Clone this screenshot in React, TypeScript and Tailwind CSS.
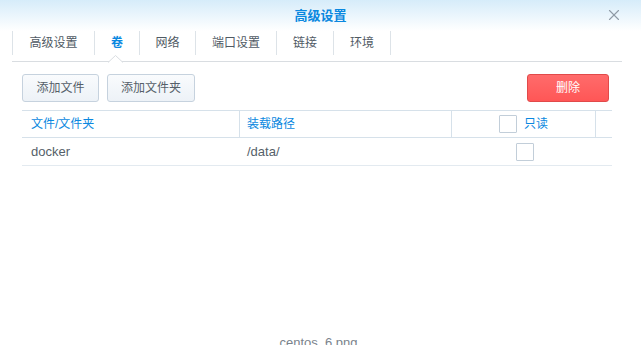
import { X } from "lucide-react";

const tabs = ["高级设置", "卷", "网络", "端口设置", "链接", "环境"];
const tabWidths = ["w-[81px]", "w-[44px]", "w-[55px]", "w-[80px]", "w-[56px]", "w-[56px]"];

export default function App() {
  return (
    <div className="w-[641px] h-[345px] overflow-hidden bg-white relative font-['Liberation_Sans','Noto_Sans_CJK_SC',sans-serif]">
      {/* 标题栏 */}
      <div className="h-[31px] bg-gradient-to-b from-[#d6ecfa] to-white flex items-center justify-center relative">
        <span className="text-[13px] font-bold text-[#0a88e0] leading-none">高级设置</span>
        <X className="absolute right-[18px] top-[6px] text-[#8f9ba6]" size={18} strokeWidth={1.5} />
      </div>

      {/* 标签 */}
      <div className="mx-[12px] w-[610px] h-[31px] border-b border-[#d9dde1] flex relative">
        <div className="w-px h-[24px] bg-[#dde3e8]" />
        {tabs.map((t, i) => (
          <div key={t} className="flex items-start">
            <div
              className={`${tabWidths[i]} h-[24px] flex items-center justify-center text-[12px] ${
                i === 1 ? "text-[#0a88e0] font-bold" : "text-[#505a64]"
              }`}
            >
              {t}
            </div>
            <div className="w-px h-[24px] bg-[#dde3e8]" />
          </div>
        ))}
        {/* 当前标签的小三角 */}
        <svg className="absolute left-[96px] top-[24px]" width="15" height="8" viewBox="0 0 15 8">
          <path d="M0 7.5 L7.5 0.5 L15 7.5" fill="white" stroke="#d9dde1" strokeWidth="1" />
        </svg>
      </div>

      {/* 工具栏 */}
      <div className="mt-[12px] px-[22px] flex items-center w-[631px]">
        <button className="w-[77px] h-[28px] rounded-[3px] border border-[#c6d2de] bg-gradient-to-b from-[#f9fbfd] to-[#edf2f7] text-[12px] text-[#555f69]">
          添加文件
        </button>
        <button className="ml-[8px] w-[88px] h-[28px] rounded-[3px] border border-[#c6d2de] bg-gradient-to-b from-[#f9fbfd] to-[#edf2f7] text-[12px] text-[#555f69]">
          添加文件夹
        </button>
        <button className="ml-auto w-[82px] h-[28px] rounded-[3px] border border-[#e14a4a] bg-gradient-to-b from-[#ff6b6b] to-[#ff5656] text-[12px] text-white">
          删除
        </button>
      </div>

      {/* 表格 */}
      <div className="mt-[8px] ml-[22px] w-[590px]">
        <div className="h-[28px] border-t border-b border-[#d6e1ea] flex text-[12px] text-[#0a88e0]">
          <div className="w-[218px] pl-[9px] flex items-center border-r border-[#d6e1ea]">文件/文件夹</div>
          <div className="w-[212px] pl-[7px] flex items-center border-r border-[#d6e1ea]">装载路径</div>
          <div className="w-[144px] flex items-center justify-center border-r border-[#d6e1ea] gap-[7px]">
            <span className="w-[18px] h-[18px] border border-[#c2ced9] rounded-[1px] bg-white" />
            <span>只读</span>
          </div>
          <div className="flex-1" />
        </div>
        <div className="h-[28px] border-b border-[#e3eaf0] flex text-[13px] text-[#555f69]">
          <div className="w-[218px] pl-[9px] flex items-center">docker</div>
          <div className="w-[212px] pl-[7px] flex items-center">/data/</div>
          <div className="w-[144px] flex items-center justify-center pl-[2px]">
            <span className="w-[18px] h-[18px] border border-[#c2ced9] rounded-[1px] bg-white" />
          </div>
        </div>
      </div>

      {/* 底部文件名 */}
      <div className="absolute left-0 right-0 top-[333px] text-center text-[13px] text-[#7a838c] pr-[4px]">
        centos_6.png
      </div>
    </div>
  );
}
